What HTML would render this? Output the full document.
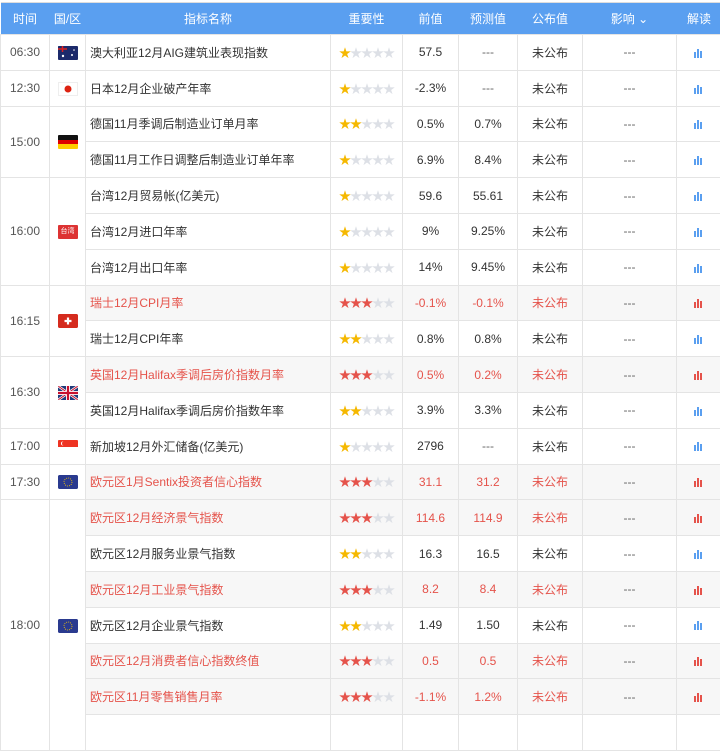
<!DOCTYPE html>
<html><head><meta charset="utf-8"><style>
*{margin:0;padding:0;box-sizing:border-box}
body{width:720px;height:704px;overflow:hidden;background:#fff;font-family:"Liberation Sans","Noto Sans CJK SC",sans-serif;font-size:12px;color:#333}
table{border-collapse:collapse;table-layout:fixed;width:721px;margin-top:2px;border-top:1px solid #ddd}
th{background:#5a9ff0;color:#fff;font-weight:normal;height:32px;font-size:12px}
td{border:1px solid #e4e4e4;height:35.8px;text-align:center;padding:0}
td.n{text-align:left;padding-left:4px}
td.t{color:#555}
tr.r td{background:#f7f7f7;color:#e5534b}
tr.r td.t,tr.r td.f{background:#fff;color:#555}
tr.r td.dash{color:#666}
.s{font-size:12px;letter-spacing:-1px;color:#dde0e6}
.s b{font-weight:normal;color:#f5b800}
tr.r .s b{color:#e5534b}
.c{display:inline-block;width:10px;height:9px;position:relative;vertical-align:middle}
.c i{position:absolute;bottom:0;width:2px;background:#5a9ff0}
tr.r .c i{background:#e5534b}
.fl{display:inline-block;width:20px;height:14px;vertical-align:middle;border-radius:1px}
.dash{color:#666}
</style></head><body>
<table>
<colgroup><col style="width:49px"><col style="width:36px"><col style="width:245px"><col style="width:72px"><col style="width:56px"><col style="width:59px"><col style="width:65px"><col style="width:94px"><col style="width:45px"></colgroup>
<tr><th>时间</th><th>国/区</th><th>指标名称</th><th>重要性</th><th>前值</th><th>预测值</th><th>公布值</th><th>影响 &#8964;</th><th>解读</th></tr>

<tr><td class="t">06:30</td><td class="f"><svg class="fl" viewBox="0 0 20 14"><rect width="20" height="14" fill="#1c2a6b"/><rect width="9" height="6" fill="#1c2a6b"/><path d="M0 3h9M4.5 0v6" stroke="#d22" stroke-width="1.5"/><circle cx="14" cy="9" r="1" fill="#fff"/><circle cx="5" cy="10" r="1.2" fill="#fff"/><circle cx="16" cy="4" r=".8" fill="#fff"/></svg></td><td class="n">澳大利亚12月AIG建筑业表现指数</td><td><span class="s"><b>★</b>★★★★</span></td><td>57.5</td><td class="dash">---</td><td>未公布</td><td class="dash">---</td><td><span class="c"><i style="left:0;height:6px"></i><i style="left:3px;height:9px"></i><i style="left:6px;height:7px"></i></span></td></tr>

<tr><td class="t">12:30</td><td class="f"><svg class="fl" viewBox="0 0 20 14"><rect width="20" height="14" fill="#fff" stroke="#ddd"/><circle cx="10" cy="7" r="3.5" fill="#d21"/></svg></td><td class="n">日本12月企业破产年率</td><td><span class="s"><b>★</b>★★★★</span></td><td>-2.3%</td><td class="dash">---</td><td>未公布</td><td class="dash">---</td><td><span class="c"><i style="left:0;height:6px"></i><i style="left:3px;height:9px"></i><i style="left:6px;height:7px"></i></span></td></tr>

<tr><td class="t" rowspan="2">15:00</td><td class="f" rowspan="2"><svg class="fl" viewBox="0 0 20 14"><rect width="20" height="5" fill="#111"/><rect y="5" width="20" height="4" fill="#d00"/><rect y="9" width="20" height="5" fill="#fc0"/></svg></td><td class="n">德国11月季调后制造业订单月率</td><td><span class="s"><b>★★</b>★★★</span></td><td>0.5%</td><td>0.7%</td><td>未公布</td><td class="dash">---</td><td><span class="c"><i style="left:0;height:6px"></i><i style="left:3px;height:9px"></i><i style="left:6px;height:7px"></i></span></td></tr>
<tr><td class="n">德国11月工作日调整后制造业订单年率</td><td><span class="s"><b>★</b>★★★★</span></td><td>6.9%</td><td>8.4%</td><td>未公布</td><td class="dash">---</td><td><span class="c"><i style="left:0;height:6px"></i><i style="left:3px;height:9px"></i><i style="left:6px;height:7px"></i></span></td></tr>

<tr><td class="t" rowspan="3">16:00</td><td class="f" rowspan="3"><span class="fl" style="background:#d33;color:#fff;font-size:7px;line-height:14px">台湾</span></td><td class="n">台湾12月贸易帐(亿美元)</td><td><span class="s"><b>★</b>★★★★</span></td><td>59.6</td><td>55.61</td><td>未公布</td><td class="dash">---</td><td><span class="c"><i style="left:0;height:6px"></i><i style="left:3px;height:9px"></i><i style="left:6px;height:7px"></i></span></td></tr>
<tr><td class="n">台湾12月进口年率</td><td><span class="s"><b>★</b>★★★★</span></td><td>9%</td><td>9.25%</td><td>未公布</td><td class="dash">---</td><td><span class="c"><i style="left:0;height:6px"></i><i style="left:3px;height:9px"></i><i style="left:6px;height:7px"></i></span></td></tr>
<tr><td class="n">台湾12月出口年率</td><td><span class="s"><b>★</b>★★★★</span></td><td>14%</td><td>9.45%</td><td>未公布</td><td class="dash">---</td><td><span class="c"><i style="left:0;height:6px"></i><i style="left:3px;height:9px"></i><i style="left:6px;height:7px"></i></span></td></tr>

<tr class="r"><td class="t" rowspan="2">16:15</td><td class="f" rowspan="2"><svg class="fl" viewBox="0 0 20 14"><rect width="20" height="14" rx="1.5" fill="#d52b1e"/><path d="M10 3.5v7M6.5 7h7" stroke="#fff" stroke-width="2.2"/></svg></td><td class="n">瑞士12月CPI月率</td><td><span class="s"><b>★★★</b>★★</span></td><td>-0.1%</td><td>-0.1%</td><td>未公布</td><td class="dash">---</td><td><span class="c"><i style="left:0;height:6px"></i><i style="left:3px;height:9px"></i><i style="left:6px;height:7px"></i></span></td></tr>
<tr><td class="n">瑞士12月CPI年率</td><td><span class="s"><b>★★</b>★★★</span></td><td>0.8%</td><td>0.8%</td><td>未公布</td><td class="dash">---</td><td><span class="c"><i style="left:0;height:6px"></i><i style="left:3px;height:9px"></i><i style="left:6px;height:7px"></i></span></td></tr>

<tr class="r"><td class="t" rowspan="2">16:30</td><td class="f" rowspan="2"><svg class="fl" viewBox="0 0 20 14"><rect width="20" height="14" fill="#1f3a7a"/><path d="M0 0L20 14M20 0L0 14" stroke="#fff" stroke-width="2.5"/><path d="M0 0L20 14M20 0L0 14" stroke="#c8102e" stroke-width="1"/><path d="M10 0v14M0 7h20" stroke="#fff" stroke-width="4"/><path d="M10 0v14M0 7h20" stroke="#c8102e" stroke-width="2.2"/></svg></td><td class="n">英国12月Halifax季调后房价指数月率</td><td><span class="s"><b>★★★</b>★★</span></td><td>0.5%</td><td>0.2%</td><td>未公布</td><td class="dash">---</td><td><span class="c"><i style="left:0;height:6px"></i><i style="left:3px;height:9px"></i><i style="left:6px;height:7px"></i></span></td></tr>
<tr><td class="n">英国12月Halifax季调后房价指数年率</td><td><span class="s"><b>★★</b>★★★</span></td><td>3.9%</td><td>3.3%</td><td>未公布</td><td class="dash">---</td><td><span class="c"><i style="left:0;height:6px"></i><i style="left:3px;height:9px"></i><i style="left:6px;height:7px"></i></span></td></tr>

<tr><td class="t">17:00</td><td class="f"><svg class="fl" viewBox="0 0 20 14"><rect width="20" height="7" fill="#e32"/><rect y="7" width="20" height="7" fill="#fff"/><circle cx="5" cy="3.5" r="2" fill="#fff"/><circle cx="6" cy="3.5" r="2" fill="#e32"/></svg></td><td class="n">新加坡12月外汇储备(亿美元)</td><td><span class="s"><b>★</b>★★★★</span></td><td>2796</td><td class="dash">---</td><td>未公布</td><td class="dash">---</td><td><span class="c"><i style="left:0;height:6px"></i><i style="left:3px;height:9px"></i><i style="left:6px;height:7px"></i></span></td></tr>

<tr class="r"><td class="t">17:30</td><td class="f"><svg class="fl" viewBox="0 0 20 14"><rect width="20" height="14" rx="1.5" fill="#2a3a8f"/><circle cx="10" cy="7" r="4" fill="none" stroke="#fc0" stroke-width=".8" stroke-dasharray="1 1.1"/></svg></td><td class="n">欧元区1月Sentix投资者信心指数</td><td><span class="s"><b>★★★</b>★★</span></td><td>31.1</td><td>31.2</td><td>未公布</td><td class="dash">---</td><td><span class="c"><i style="left:0;height:6px"></i><i style="left:3px;height:9px"></i><i style="left:6px;height:7px"></i></span></td></tr>

<tr class="r"><td class="t" rowspan="7">18:00</td><td class="f" rowspan="7"><svg class="fl" viewBox="0 0 20 14"><rect width="20" height="14" rx="1.5" fill="#2a3a8f"/><circle cx="10" cy="7" r="4" fill="none" stroke="#fc0" stroke-width=".8" stroke-dasharray="1 1.1"/></svg></td><td class="n">欧元区12月经济景气指数</td><td><span class="s"><b>★★★</b>★★</span></td><td>114.6</td><td>114.9</td><td>未公布</td><td class="dash">---</td><td><span class="c"><i style="left:0;height:6px"></i><i style="left:3px;height:9px"></i><i style="left:6px;height:7px"></i></span></td></tr>
<tr><td class="n">欧元区12月服务业景气指数</td><td><span class="s"><b>★★</b>★★★</span></td><td>16.3</td><td>16.5</td><td>未公布</td><td class="dash">---</td><td><span class="c"><i style="left:0;height:6px"></i><i style="left:3px;height:9px"></i><i style="left:6px;height:7px"></i></span></td></tr>
<tr class="r"><td class="n">欧元区12月工业景气指数</td><td><span class="s"><b>★★★</b>★★</span></td><td>8.2</td><td>8.4</td><td>未公布</td><td class="dash">---</td><td><span class="c"><i style="left:0;height:6px"></i><i style="left:3px;height:9px"></i><i style="left:6px;height:7px"></i></span></td></tr>
<tr><td class="n">欧元区12月企业景气指数</td><td><span class="s"><b>★★</b>★★★</span></td><td>1.49</td><td>1.50</td><td>未公布</td><td class="dash">---</td><td><span class="c"><i style="left:0;height:6px"></i><i style="left:3px;height:9px"></i><i style="left:6px;height:7px"></i></span></td></tr>
<tr class="r"><td class="n">欧元区12月消费者信心指数终值</td><td><span class="s"><b>★★★</b>★★</span></td><td>0.5</td><td>0.5</td><td>未公布</td><td class="dash">---</td><td><span class="c"><i style="left:0;height:6px"></i><i style="left:3px;height:9px"></i><i style="left:6px;height:7px"></i></span></td></tr>
<tr class="r"><td class="n">欧元区11月零售销售月率</td><td><span class="s"><b>★★★</b>★★</span></td><td>-1.1%</td><td>1.2%</td><td>未公布</td><td class="dash">---</td><td><span class="c"><i style="left:0;height:6px"></i><i style="left:3px;height:9px"></i><i style="left:6px;height:7px"></i></span></td></tr>
<tr><td class="n">&nbsp;</td><td></td><td></td><td></td><td></td><td></td><td></td></tr>
</table>
</body></html>
